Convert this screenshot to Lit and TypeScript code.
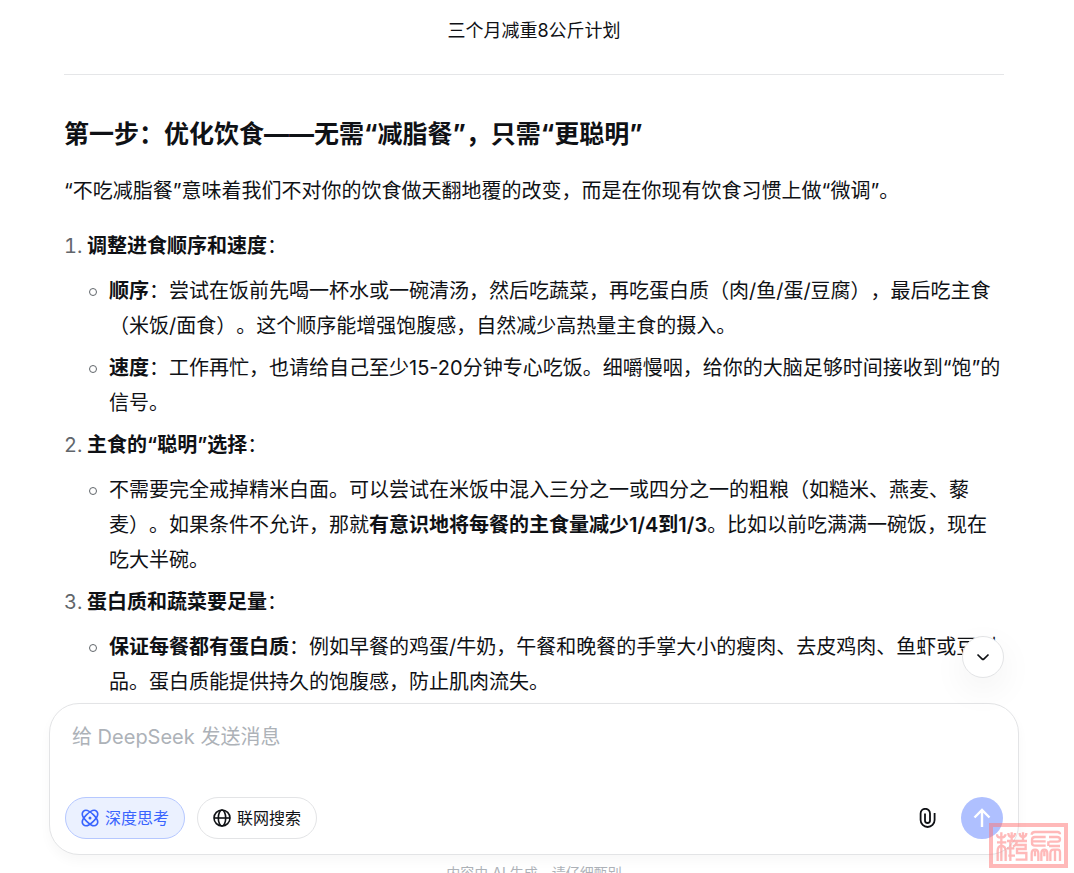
import { LitElement, html, css } from "lit";
import { customElement } from "lit/decorators.js";

@customElement("app-root")
export class AppRoot extends LitElement {
  static styles = css`
    :host {
      display: flex;
      flex-direction: column;
      position: relative;
      height: 100vh;
      overflow: hidden;
      box-sizing: border-box;
      padding-right: 6px;
      background: #fff;
      color: #0f1115;
      font-family: Inter, "Noto Sans CJK SC", sans-serif;
      font-size: 20px;
      line-height: 35px;
      text-spacing-trim: space-all;
    }
    .title {
      flex: none;
      margin: 0;
      padding: 16px 0 15px;
      text-align: center;
      font-size: 18px;
      font-weight: 400;
      line-height: 30px;
    }
    .thread {
      flex: 1 1 0;
      min-height: 0;
      overflow: hidden;
      padding: 13px 64px 0;
    }
    .column {
      max-width: 940px;
      margin: 0 auto;
    }
    .rule {
      height: 1px;
      border: 0;
      margin: 0 0 40px;
      background: #e5e6e8;
    }
    h3 {
      margin: 0 0 21px;
      font-size: 25px;
      font-weight: 700;
      line-height: 38px;
    }
    p {
      margin: 0 0 20px;
    }
    strong {
      font-weight: 600;
    }
    .steps {
      list-style: none;
      margin: 0;
      padding: 0;
      counter-reset: step;
    }
    .step {
      counter-increment: step;
      display: grid;
      grid-template-columns: 23px minmax(0, 1fr);
      margin-top: 7px;
    }
    .step::before {
      content: counter(step) ".";
      color: #61666b;
      font-variant-numeric: tabular-nums;
    }
    .points {
      list-style: none;
      margin: 10px 0 0;
      padding: 0 0 0 22px;
      display: grid;
      gap: 7px;
    }
    .points li {
      position: relative;
    }
    .points li::before {
      content: "";
      position: absolute;
      left: -20px;
      top: 14px;
      width: 6px;
      height: 6px;
      border: 1px solid #61666b;
      border-radius: 50%;
    }
    .dock {
      flex: none;
      position: relative;
      padding: 0 49px;
    }
    .composer {
      box-sizing: border-box;
      max-width: 970px;
      margin: 0 auto;
      display: flex;
      flex-direction: column;
      gap: 20px;
      padding: 16px 15px 15px;
      border: 1px solid #e3e4e6;
      border-radius: 30px;
      background: #fff;
      box-shadow: 0 6px 12px rgba(0, 0, 0, 0.03);
    }
    textarea {
      display: block;
      box-sizing: border-box;
      width: 100%;
      height: 57px;
      padding: 0 7px;
      border: 0;
      outline: 0;
      resize: none;
      background: none;
      font: inherit;
      line-height: 34px;
      color: inherit;
    }
    textarea::placeholder {
      color: #adb2b8;
      opacity: 1;
    }
    .tools {
      display: flex;
      align-items: center;
      gap: 12px;
    }
    button {
      display: flex;
      align-items: center;
      justify-content: center;
      box-sizing: border-box;
      height: 42px;
      padding: 0;
      border: 0;
      background: none;
      color: inherit;
      font: inherit;
      cursor: pointer;
    }
    .chip {
      gap: 6px;
      padding: 0 15px;
      border: 1px solid #e3e4e6;
      border-radius: 21px;
      font-size: 16px;
      line-height: 24px;
    }
    .chip.on {
      color: #3964fe;
      background: #ebf1ff;
      border-color: #b6c8ff;
    }
    .attach {
      width: 42px;
      margin-left: auto;
    }
    .send {
      width: 42px;
      border-radius: 50%;
      background: #afc0ff;
      color: #fff;
    }
    .down {
      position: absolute;
      right: 64px;
      bottom: calc(100% + 25px);
      width: 42px;
      border: 1px solid #e3e4e6;
      border-radius: 50%;
      background: #fff;
      box-shadow: 0 12px 36px rgba(0, 0, 0, 0.06);
    }
    .note {
      flex: none;
      height: 18px;
      overflow: hidden;
      box-sizing: border-box;
      padding-top: 8px;
      text-align: center;
      font-size: 14px;
      line-height: 20px;
      color: #adb2b8;
    }
    .seal {
      position: absolute;
      right: 6px;
      bottom: 5px;
      opacity: 0.5;
      pointer-events: none;
    }
    svg {
      display: block;
      flex: none;
    }
  `;

  render() {
    return html`
      <h1 class="title">三个月减重8公斤计划</h1>
      <main class="thread">
        <div class="column">
          <hr class="rule" />
          <h3>第一步：优化饮食——无需“减脂餐”，只需“更聪明”</h3>
          <p>“不吃减脂餐”意味着我们不对你的饮食做天翻地覆的改变，而是在你现有饮食习惯上做“微调”。</p>
          <ol class="steps">
            <li class="step"><div>
              <strong>调整进食顺序和速度</strong>：
              <ul class="points">
                <li><strong>顺序</strong>：尝试在饭前先喝一杯水或一碗清汤，然后吃蔬菜，再吃蛋白质（肉/鱼/蛋/豆腐），最后吃主食（米饭/面食）。这个顺序能增强饱腹感，自然减少高热量主食的摄入。</li>
                <li><strong>速度</strong>：工作再忙，也请给自己至少15-20分钟专心吃饭。细嚼慢咽，给你的大脑足够时间接收到“饱”的信号。</li>
              </ul></div>
            </li>
            <li class="step"><div>
              <strong>主食的“聪明”选择</strong>：
              <ul class="points">
                <li>不需要完全戒掉精米白面。可以尝试在米饭中混入三分之一或四分之一的粗粮（如糙米、燕麦、藜麦）。如果条件不允许，那就<strong>有意识地将每餐的主食量减少1/4到1/3</strong>。比如以前吃满满一碗饭，现在吃大半碗。</li>
              </ul></div>
            </li>
            <li class="step"><div>
              <strong>蛋白质和蔬菜要足量</strong>：
              <ul class="points">
                <li><strong>保证每餐都有蛋白质</strong>：例如早餐的鸡蛋/牛奶，午餐和晚餐的手掌大小的瘦肉、去皮鸡肉、鱼虾或豆制品。蛋白质能提供持久的饱腹感，防止肌肉流失。</li>
              </ul></div>
            </li>
          </ol>
        </div>
      </main>
      <div class="dock">
        <button class="down" type="button" aria-label="滚动到底部">
          <svg width="14" height="14" viewBox="0 0 14 14" fill="none" stroke="currentColor" stroke-width="1.7"><path d="M1.5 4.5 6.2 9Q7 9.7 7.8 9L12.5 4.5" /></svg>
        </button>
        <form class="composer" @submit=${(e: Event) => e.preventDefault()}>
          <textarea aria-label="消息" placeholder="给 DeepSeek 发送消息"></textarea>
          <div class="tools">
            <button class="chip on" type="button" aria-pressed="true">
              <svg width="18" height="18" viewBox="-9 -9 18 18" fill="none" stroke="currentColor" stroke-width="1.6">
                <path transform="rotate(45)" d="M-9.4 0C-9.4-3.6-5.2-4.7 0-4.7S9.4-3.6 9.4 0 5.2 4.7 0 4.7-9.4 3.6-9.4 0Z" />
                <path transform="rotate(-45)" d="M-9.4 0C-9.4-3.6-5.2-4.7 0-4.7S9.4-3.6 9.4 0 5.2 4.7 0 4.7-9.4 3.6-9.4 0Z" />
                <circle r="1.5" fill="currentColor" stroke="none" />
              </svg>
              深度思考
            </button>
            <button class="chip" type="button" aria-pressed="false">
              <svg width="18" height="18" viewBox="0 0 18 18" fill="none" stroke="currentColor" stroke-width="1.6">
                <circle cx="9" cy="9" r="8" /><ellipse cx="9" cy="9" rx="3.7" ry="8" /><path d="M1 9h16" />
              </svg>
              联网搜索
            </button>
            <button class="attach" type="button" aria-label="上传附件">
              <svg width="18" height="20" viewBox="1 0 18 20" fill="none" stroke="currentColor" stroke-width="1.8">
                <path d="M7 5.5v7a2.5 2.5 0 0 0 5 0V5.5a4.7 4.7 0 0 0-9.4 0v6.5a7 7 0 0 0 14 0V5" />
              </svg>
            </button>
            <button class="send" type="submit" aria-label="发送">
              <svg width="18" height="20" viewBox="0 0 18 20" fill="none" stroke="currentColor" stroke-width="2.4"><path d="M9 19V2.5M1.5 9.5 9 2l7.5 7.5" /></svg>
            </button>
          </div>
        </form>
      </div>
      <footer class="note">内容由 AI 生成，请仔细甄别</footer>
      <svg class="seal" width="79" height="45" viewBox="0 0 237 135" fill="none" stroke="#ff7575" stroke-width="7" aria-hidden="true">
        <rect x="6" y="6" width="225" height="123" stroke-width="12" />
        <path d="M24 34q0 10 12 10t14-10M24 58h28M37 28v86M26 114V84q0-14 11-16 13 2 13 16v30" />
        <path d="M58 30q0 12 10 12t10-12M68 28v26M92 30q0 12 10 12t10-12M102 28v26M54 54h60M64 54v60M54 76h22M84 54q-2 14-12 16M82 66h28v12H84v12h28v20H80M58 98h20" />
        <path d="M213 34q0-7-8-7H138q-10 0-10 8M170 42H138q-9 0-9 8v10q0 8 9 8h32M130 55h40M180 42h24q9 0 9 7t-8 7h-24M180 69h33M178 55v14" />
        <path d="M128 114V92q0-12 10-12t10 12v22M138 84v16M157 114V92q0-12 9-12t9 12v22M166 84v16M184 114V92q0-12 9-12h14q6 0 6 8v26M198 82v32" />
      </svg>
    `;
  }
}
